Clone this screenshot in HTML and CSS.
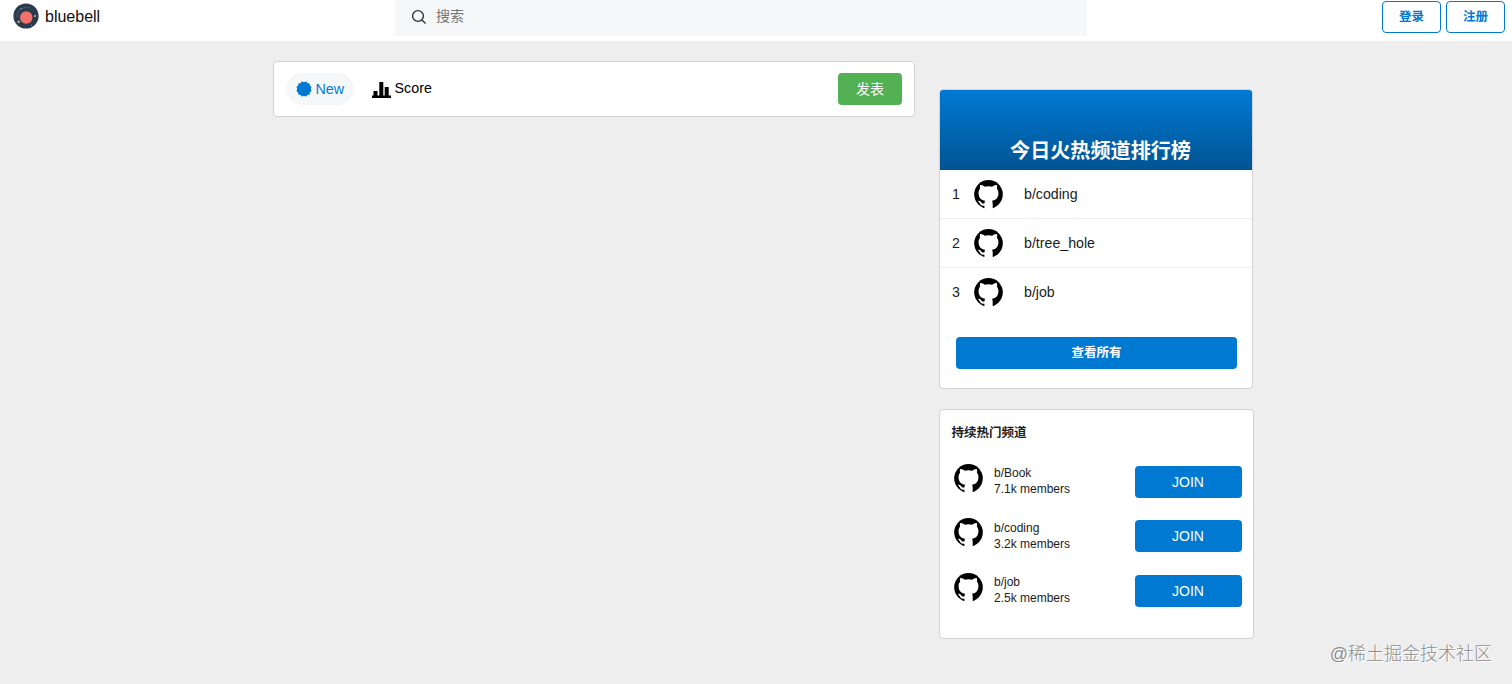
FILE: index.html
```html
<!DOCTYPE html>
<html lang="zh-CN">
<head>
<meta charset="utf-8">
<title>bluebell</title>
<link rel="stylesheet" href="styles.css">
</head>
<body>
<svg class="sprite" aria-hidden="true">
  <symbol id="github" viewBox="0 0 29 29"><circle cx="14.5" cy="14.3" r="14.3"/><path fill="#fff" d="M6.2 5.1C7.8 4.8 9.5 5.8 10.7 6.7Q14.5 5.8 18.3 6.7C19.5 5.8 21.2 4.8 22.8 5.1Q23.5 7 22.9 8.8C24.2 10.2 24.6 12 24.4 14C24 18.2 21.8 20 18 20.7Q18.8 22 18.7 24V29H10.4V25.7C7.2 26.2 6.5 24.6 5.6 23Q4.9 21.7 3.9 20.9Q5.5 20.1 7 21.9C8 23.5 9 24 10.5 23.3Q10.5 21.5 11.2 20.7C7.2 20 5 18.2 4.6 14C4.4 12 4.8 10.2 6.1 8.8Q5.5 7 6.2 5.1Z"/></symbol>
</svg>
<header class="header">
  <div class="brand">
    <svg class="logo" viewBox="0 0 26 26"><circle cx="13" cy="13" r="12.6" fill="#2b3b4e"/><path d="M4 14a9.5 9.5 0 0 1 13-9" fill="none" stroke="#526273" stroke-width=".8"/><circle cx="13.3" cy="14.5" r="6.2" fill="#f3706c"/><circle cx="22" cy="13" r="1.1" fill="#d9b078"/><circle cx="5.7" cy="18.7" r="1.2" fill="#c9b77c"/><circle cx="8" cy="5.5" r=".6" fill="#c7d0d8"/><circle cx="18.5" cy="22" r=".6" fill="#8392a0"/></svg>
    <span class="brand-name">bluebell</span>
  </div>
  <div class="search">
    <svg class="search-icon" viewBox="0 0 16 16"><circle cx="7" cy="7" r="5.4"/><path d="M11 11l3.6 3.4"/></svg>
    <span>搜索</span>
  </div>
  <div class="auth"><button class="auth-btn">登录</button><button class="auth-btn">注册</button></div>
</header>
<main class="content">
  <section class="toolbar card">
    <div class="tab tab-active">
      <svg class="tab-icon" viewBox="0 0 16 16"><g fill="#0079d3"><circle cx="8" cy="8" r="7"/><rect x="2.4" y="2.4" width="11.2" height="11.2"/><rect x="2.4" y="2.4" width="11.2" height="11.2" transform="rotate(30 8 8)"/><rect x="2.4" y="2.4" width="11.2" height="11.2" transform="rotate(60 8 8)"/></g></svg>
      <span>New</span>
    </div>
    <div class="tab tab-score">
      <svg class="score-icon" viewBox="0 0 19 16"><path d="M0 13.5h19V16H0zM1.5 9h4v5h-4zM7.3 0h4v14h-4zM12.7 5h4v9h-4z"/></svg>
      <span>Score</span>
    </div>
    <button class="post-btn">发表</button>
  </section>
  <aside class="side">
    <section class="card ranking">
      <h2 class="ranking-title">今日火热频道排行榜</h2>
      <ul class="rank-list">
        <li class="rank-row"><span class="rank-no">1</span><svg class="avatar"><use href="#github"/></svg><span class="rank-name">b/coding</span></li>
        <li class="rank-row"><span class="rank-no">2</span><svg class="avatar"><use href="#github"/></svg><span class="rank-name">b/tree_hole</span></li>
        <li class="rank-row"><span class="rank-no">3</span><svg class="avatar"><use href="#github"/></svg><span class="rank-name">b/job</span></li>
      </ul>
      <button class="view-all">查看所有</button>
    </section>
    <section class="card popular">
      <h3 class="popular-title">持续热门频道</h3>
      <ul class="popular-list">
        <li class="popular-row"><svg class="avatar"><use href="#github"/></svg><div class="info">b/Book<br>7.1k members</div><button class="join">JOIN</button></li>
        <li class="popular-row"><svg class="avatar"><use href="#github"/></svg><div class="info">b/coding<br>3.2k members</div><button class="join">JOIN</button></li>
        <li class="popular-row"><svg class="avatar"><use href="#github"/></svg><div class="info">b/job<br>2.5k members</div><button class="join">JOIN</button></li>
      </ul>
    </section>
  </aside>
</main>
<div class="watermark">@稀土掘金技术社区</div>
</body>
</html>
```

FILE: styles.css
```css
* { box-sizing: border-box; }
body {
  margin: 0;
  height: 684px;
  overflow: hidden;
  background: #eee;
  color: #1c1c1c;
  font-family: "Liberation Sans", "Noto Sans CJK SC", sans-serif;
}
button { font-family: inherit; padding: 0; border: 0; border-radius: 4px; }
ul { list-style: none; margin: 0; padding: 0; }
h2, h3 { margin: 0; }
.sprite { display: none; }

.header {
  display: flex;
  align-items: flex-start;
  height: 41px;
  padding: 0 7px 0 13px;
  background: #fff;
}
.brand { display: flex; align-items: center; gap: 6px; width: 382px; height: 33px; }
.logo { width: 26px; height: 26px; margin-top: -1px; }
.brand-name { font-size: 16px; color: #111; }
.search {
  display: flex;
  align-items: center;
  gap: 9px;
  width: 692px;
  height: 36px;
  padding: 0 16px 3px;
  background: #f6f7f8;
  color: #757575;
  font-size: 14px;
}
.search span { margin-top: -3px; }
.search-icon { width: 16px; height: 16px; fill: none; stroke: #333; stroke-width: 1.4; }
.auth { display: flex; gap: 5px; margin: 1px 0 0 auto; }
.auth-btn {
  width: 59px;
  height: 32px;
  padding-bottom: 3px;
  border: 1px solid #0079d3;
  background: #fff;
  color: #0079d3;
  font-size: 12.5px;
  font-weight: 700;
}

.content { display: flex; align-items: flex-start; gap: 24px; padding: 20px 0 0 273px; }
.card { background: #fff; border: 1px solid #d2d3d4; border-radius: 4px; }
.toolbar { display: flex; align-items: center; width: 642px; height: 56px; padding: 0 12px; }
.tab { display: flex; align-items: center; font-size: 14.3px; color: #000; }
.tab-active { gap: 4px; width: 68px; height: 32px; padding-left: 9.5px; border-radius: 16px; background: #f6f7f8; color: #0079d3; }
.tab-icon { width: 16px; height: 16px; }
.tab-score { gap: 3.5px; margin-left: 18px; padding-bottom: 2px; }
.score-icon { width: 19px; height: 16px; margin-top: 4px; }
.post-btn { width: 64px; height: 32px; padding-bottom: 2px; margin-left: auto; background: #52b153; color: #fff; font-size: 14px; }

.side { display: flex; flex-direction: column; gap: 20px; padding-top: 28px; }
.ranking { width: 314px; height: 300px; overflow: hidden; }
.ranking-title {
  height: 80px;
  padding: 45px 0 0 9px;
  background: linear-gradient(#0079d3, #005493);
  color: #fff;
  font-size: 20.1px;
  line-height: 32px;
  text-align: center;
}
.rank-row { display: flex; align-items: center; height: 49px; padding-left: 12px; border-bottom: 1px solid #edeff1; font-size: 14.2px; }
.rank-row:last-child { border-color: transparent; }
.rank-no { width: 22px; }
.avatar { width: 29px; height: 29px; flex: none; fill: #000; }
.rank-name { margin-left: 21px; }
.view-all { display: block; width: 281px; height: 32px; padding-bottom: 2px; margin: 19.5px 0 0 16px; background: #0079d3; color: #fff; font-size: 12.5px; font-weight: 700; }
.popular { width: 315px; height: 230px; padding: 13px 11.5px; }
.popular-title { font-size: 12.5px; line-height: 20px; }
.popular-list { display: grid; gap: 22.5px; margin-top: 22.5px; }
.popular-row { display: flex; height: 32px; }
.popular .avatar { margin: -2px 0 0 2.5px; }
.info { margin: -0.5px 0 0 11px; font-size: 12px; line-height: 16px; }
.join { width: 107px; height: 32px; margin-left: auto; background: #0079d3; color: #fff; font-size: 14px; }

.watermark { position: absolute; right: 20px; bottom: 16px; color: #8e8e8e; font-size: 18px; line-height: 27px; text-shadow: 1px 1px #fff; font-weight: 300; }
```
